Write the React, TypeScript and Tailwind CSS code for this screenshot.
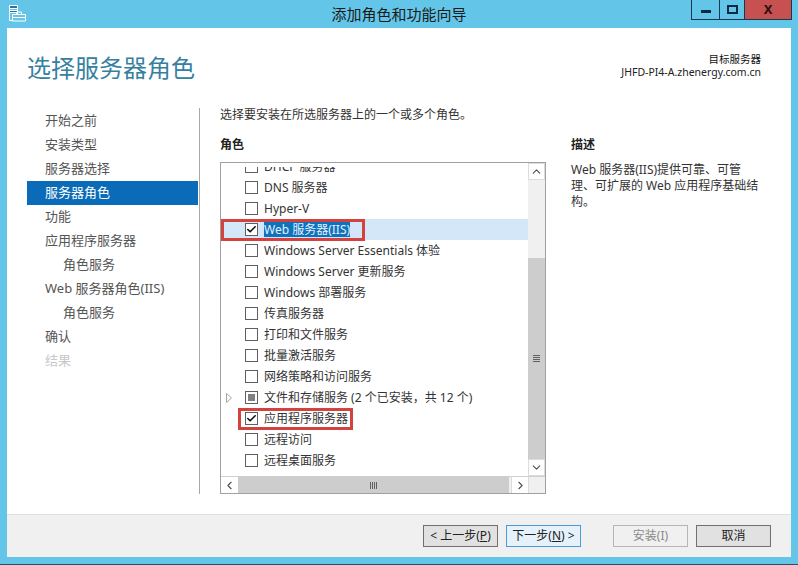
import { ChevronUp, ChevronDown, ChevronLeft, ChevronRight, Check } from "lucide-react"

const steps = [
  { label: "开始之前" },
  { label: "安装类型" },
  { label: "服务器选择" },
  { label: "服务器角色", active: true },
  { label: "功能" },
  { label: "应用程序服务器" },
  { label: "角色服务", indent: true },
  { label: "Web 服务器角色(IIS)" },
  { label: "角色服务", indent: true },
  { label: "确认" },
  { label: "结果", disabled: true },
]

const roles = [
  { label: "DHCP 服务器" },
  { label: "DNS 服务器" },
  { label: "Hyper-V" },
  { label: "Web 服务器(IIS)", checked: true, selected: true },
  { label: "Windows Server Essentials 体验" },
  { label: "Windows Server 更新服务" },
  { label: "Windows 部署服务" },
  { label: "传真服务器" },
  { label: "打印和文件服务" },
  { label: "批量激活服务" },
  { label: "网络策略和访问服务" },
  { label: "文件和存储服务 (2 个已安装，共 12 个)", partial: true, expandable: true },
  { label: "应用程序服务器", checked: true, marked: true },
  { label: "远程访问" },
  { label: "远程桌面服务" },
]

function AppIcon() {
  return (
    <svg width="17" height="17" viewBox="0 0 17 17" fill="none" stroke="#fff" strokeWidth="1">
      <path d="M0.5 0.5h8v15h-8z" />
      <path d="M0.5 0.5h8v3h-8z" fill="#2f6fa8" />
      <path d="M0.5 5.5h8v2h-8z" fill="#2f6fa8" />
      <path d="M3.5 9.5h13v6.5h-13z" fill="#63c6e8" />
      <path d="M7.5 9.5v-2.5h5v2.5M3.5 12.5h13" />
    </svg>
  )
}

function RoleRow({ role }: { role: (typeof roles)[number] }) {
  return (
    <div className={`relative flex h-[21px] items-center ${role.selected ? "bg-[#d3e7f8]" : ""}`}>
      <div className="flex w-[24px] pl-[5px]">
        {role.expandable && (
          <svg width="6" height="10" viewBox="0 0 6 10" fill="none" stroke="#a6a6a6">
            <path d="M0.5 0.5l5 4.5-5 4.5z" />
          </svg>
        )}
      </div>
      <div className="flex h-[13px] w-[13px] items-center justify-center border border-[#5f5f5f] bg-white">
        {role.checked && <Check size={13} strokeWidth={3.5} color="#111" />}
        {role.partial && <div className="h-[7px] w-[7px] bg-[#808080]" />}
      </div>
      <span
        className={`ml-[6px] whitespace-nowrap text-[12px] leading-[15px] ${
          role.selected ? "bg-[#0f72bd] text-[#e4f1fb]" : "text-[#333]"
        }`}
      >
        {role.label}
      </span>
      {role.selected && <div className="absolute left-0 top-0 h-[22px] w-[144px] border-[3px] border-[#d4423f]" />}
      {role.marked && <div className="absolute left-[17px] top-0 h-[22px] w-[115px] border-[3px] border-[#d4423f]" />}
    </div>
  )
}

function WizardButton({ label, focused, disabled }: { label: React.ReactNode; focused?: boolean; disabled?: boolean }) {
  return (
    <button
      className={`flex h-[22px] w-[75px] items-center justify-center border text-[12px] ${
        focused
          ? "border-[#4d9ad4] bg-[#e5f1fb] text-[#222]"
          : disabled
            ? "border-[#b5b5b5] bg-[#f0f0f0] text-[#8a8a8a]"
            : "border-[#707070] bg-[#e1e1e1] text-[#222]"
      }`}
    >
      {label}
    </button>
  )
}

export default function App() {
  return (
    <div
      className="flex h-[565px] w-[798px] flex-col overflow-hidden border-b border-[#2d4f63] bg-[#63c6e8] text-[#333]"
      style={{ fontFamily: '"Noto Sans", "Noto Sans CJK SC", sans-serif' }}
    >
      {/* title bar */}
      <div className="relative flex h-[28px] shrink-0 items-center justify-center">
        <div className="absolute left-[9px] top-[5px]">
          <AppIcon />
        </div>
        <span className="text-[15px] text-[#1a1a1a]">添加角色和功能向导</span>
        <div className="absolute right-[6px] top-0 flex h-[20px] border border-t-0 border-[#17384f]">
          <div className="flex w-[28px] items-center justify-center border-r border-[#17384f]">
            <div className="mt-[3px] h-[3px] w-[10px] bg-[#0d2a45]" />
          </div>
          <div className="flex w-[25px] items-center justify-center border-r border-[#17384f]">
            <div className="h-[9px] w-[11px] border-2 border-[#0d2a45]" />
          </div>
          <div className="flex w-[46px] items-center justify-center bg-[#c75050] text-[13px] font-bold leading-none text-[#2a1010]">X</div>
        </div>
      </div>

      {/* window body */}
      <div className="mx-[7px] flex flex-1 flex-col">
        <div className="flex flex-1 flex-col bg-white">
          <div className="flex h-[81px] items-start justify-between pl-[20px] pr-[30px]">
            <h1 className="mt-[23px] text-[24px] font-normal leading-[34px] text-[#36809f]">选择服务器角色</h1>
            <div className="mt-[25px] text-right text-[10.5px] leading-[13px] text-[#222]">
              <div className="text-[#111]">目标服务器</div>
              <div>JHFD-PI4-A.zhenergy.com.cn</div>
            </div>
          </div>

          <div className="flex flex-1">
            {/* steps */}
            <div className="ml-[20px] w-[171px] shrink-0">
              {steps.map((s, i) => (
                <div
                  key={i}
                  className={`flex h-[24px] items-center whitespace-nowrap text-[13px] ${s.indent ? "pl-[36px]" : "pl-[18px]"} ${
                    s.active ? "bg-[#0a6cb8] text-white" : s.disabled ? "text-[#c8c8c8]" : "text-[#555]"
                  }`}
                >
                  {s.label}
                </div>
              ))}
            </div>
            <div className="ml-[1px] mb-[20px] mt-[-1px] w-px bg-[#a8a8a8]" />

            {/* main */}
            <div className="ml-[20px] flex-1">
              <div className="mt-[-2px] text-[12px] leading-[16px]">选择要安装在所选服务器上的一个或多个角色。</div>
              <div className="mt-[13px] flex">
                <div className="w-[326px]">
                  <div className="text-[12px] font-bold leading-[18px] text-[#222]">角色</div>
                  <div className="mt-[8px] flex h-[332px] w-[326px] flex-col border border-[#a0a0a0]">
                    <div className="flex min-h-0 flex-1">
                      <div className="flex-1 pt-[4px]">
                        <div className="h-full overflow-hidden">
                          <div className="mt-[-11px]">
                            {roles.map((r) => (
                              <RoleRow key={r.label} role={r} />
                            ))}
                          </div>
                        </div>
                      </div>
                      {/* vertical scrollbar */}
                      <div className="flex w-[17px] flex-col bg-[#f0f0f0]">
                        <div className="flex h-[17px] items-center justify-center border border-[#dcdcdc] bg-white">
                          <ChevronUp size={13} color="#505050" />
                        </div>
                        <div className="h-[78px]" />
                        <div className="flex flex-1 items-center justify-center bg-[#cdcdcd]">
                          <div className="flex flex-col gap-[1px]">
                            <div className="h-px w-[7px] bg-[#606060]" />
                            <div className="h-px w-[7px] bg-[#606060]" />
                            <div className="h-px w-[7px] bg-[#606060]" />
                            <div className="h-px w-[7px] bg-[#606060]" />
                          </div>
                        </div>
                        <div className="flex h-[17px] items-center justify-center border border-[#dcdcdc] bg-white">
                          <ChevronDown size={13} color="#505050" />
                        </div>
                      </div>
                    </div>
                    {/* horizontal scrollbar */}
                    <div className="flex h-[17px] shrink-0 border-t border-[#cfcfcf] bg-[#f0f0f0]">
                      <div className="flex w-[17px] items-center justify-center bg-white">
                        <ChevronLeft size={13} color="#505050" />
                      </div>
                      <div className="flex w-[271px] items-center justify-center bg-[#cdcdcd]">
                        <div className="flex gap-[1px]">
                          <div className="h-[7px] w-px bg-[#606060]" />
                          <div className="h-[7px] w-px bg-[#606060]" />
                          <div className="h-[7px] w-px bg-[#606060]" />
                          <div className="h-[7px] w-px bg-[#606060]" />
                        </div>
                      </div>
                      <div className="ml-[2px] flex w-[17px] items-center justify-center border-l border-[#dcdcdc] bg-white">
                        <ChevronRight size={13} color="#505050" />
                      </div>
                      <div className="flex-1 border-l border-[#dcdcdc] bg-[#f0f0f0]" />
                    </div>
                  </div>
                </div>
                <div className="ml-[25px] w-[192px]">
                  <div className="text-[12px] font-bold leading-[18px] text-[#222]">描述</div>
                  <div className="mt-[8px] text-[12px] leading-[16px]">Web 服务器(IIS)提供可靠、可管理、可扩展的 Web 应用程序基础结构。</div>
                </div>
              </div>
            </div>
          </div>
        </div>

        {/* footer */}
        <div className="flex h-[43px] shrink-0 items-center border-t border-[#dfdfdf] bg-[#f0f0f0] pl-[416px]">
          <WizardButton label={<>&lt; 上一步(<u>P</u>)</>} />
          <div className="ml-[8px]">
            <WizardButton label={<>下一步(<u>N</u>) &gt;</>} focused />
          </div>
          <div className="ml-[32px]">
            <WizardButton label="安装(I)" disabled />
          </div>
          <div className="ml-[8px]">
            <WizardButton label="取消" />
          </div>
        </div>
      </div>
      <div className="h-[7px] shrink-0" />
    </div>
  )
}
